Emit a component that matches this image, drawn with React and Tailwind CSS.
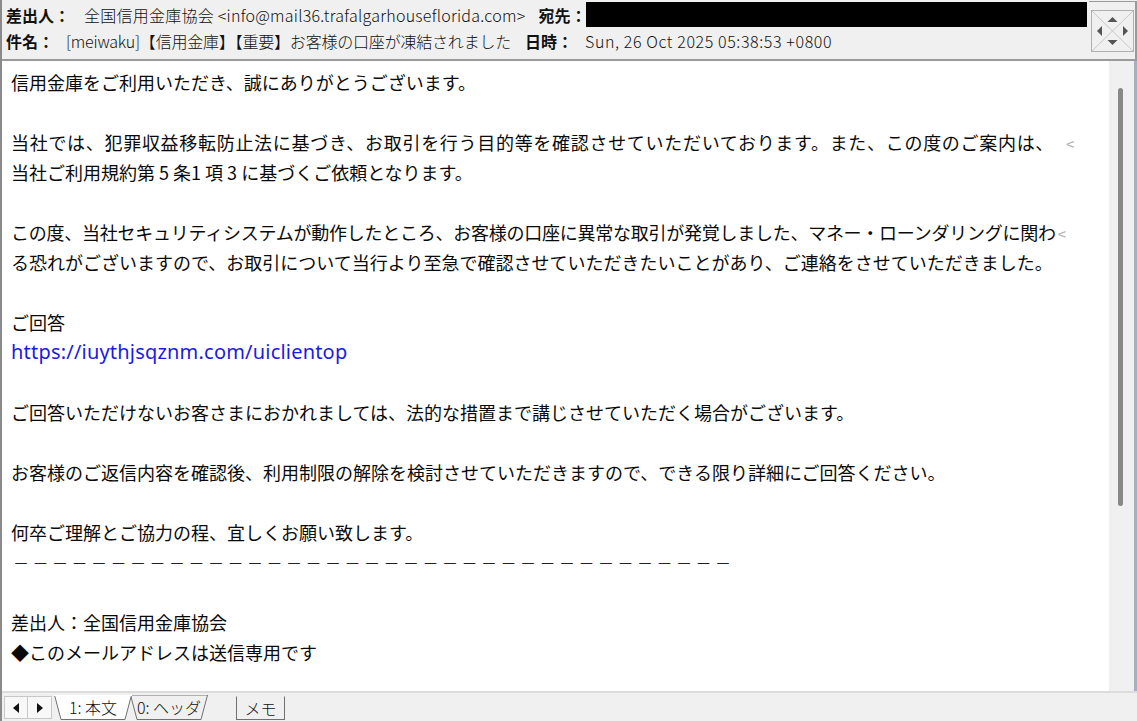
import { useState } from "react";

const jp = "font-['Noto_Sans_CJK_JP','Noto_Sans',sans-serif]";

const BODY = [
  { t: "信用金庫をご利用いただき、誠にありがとうございます。" },
  { t: "" },
  {
    t: "当社では、犯罪収益移転防止法に基づき、お取引を行う目的等を確認させていただいております。また、この度のご案内は、",
    wrap: "ml-[12px]",
    cls: "tracking-[0.7px]",
  },
  { t: "当社ご利用規約第 5 条1 項 3 に基づくご依頼となります。" },
  { t: "" },
  {
    t: "この度、当社セキュリティシステムが動作したところ、お客様の口座に異常な取引が発覚しました、マネー・ローンダリングに関わ",
    wrap: "ml-[2px]",
    cls: "tracking-[-0.25px]",
  },
  { t: "る恐れがございますので、お取引について当行より至急で確認させていただきたいことがあり、ご連絡をさせていただきました。" },
  { t: "" },
  { t: "ご回答" },
  { t: "https://iuythjsqznm.com/uiclientop", link: true },
  { t: "" },
  { t: "ご回答いただけないお客さまにおかれましては、法的な措置まで講じさせていただく場合がございます。" },
  { t: "" },
  { t: "お客様のご返信内容を確認後、利用制限の解除を検討させていただきますので、できる限り詳細にご回答ください。" },
  { t: "" },
  { t: "何卒ご理解とご協力の程、宜しくお願い致します。" },
  { dashes: true },
  { t: "" },
  { t: "差出人：全国信用金庫協会" },
  { t: "◆このメールアドレスは送信専用です" },
];

const NavWidget = () => (
  <div className="w-[43px] h-[42px] border border-[#b0b0b0] bg-[#f0f0f0]">
    <svg width="41" height="40" viewBox="0 0 41 40">
      <line x1="0" y1="0" x2="41" y2="40" stroke="#c8c8c8" strokeWidth="1" />
      <line x1="41" y1="0" x2="0" y2="40" stroke="#c8c8c8" strokeWidth="1" />
      <polygon points="20.5,6 15.5,11 25.5,11" fill="#555" />
      <polygon points="20.5,34 15.5,29 25.5,29" fill="#555" />
      <polygon points="5,20 10,15 10,25" fill="#555" />
      <polygon points="36,20 31,15 31,25" fill="#555" />
    </svg>
  </div>
);

const Tab = ({ label, active }) => (
  <div className={`relative h-[25px] w-[78px] flex items-center justify-center text-[16px] ${active ? "z-10" : ""}`}>
    <svg className="absolute inset-0" width="78" height="25" viewBox="0 0 78 25">
      <polygon
        points="0.5,0 7,24.5 71,24.5 77.5,0"
        fill={active ? "#ffffff" : "#f0f0f0"}
        stroke="#707070"
        strokeWidth="1"
      />
      {active && <line x1="0" y1="0" x2="78" y2="0" stroke="#ffffff" strokeWidth="2" />}
    </svg>
    <span className="relative text-[#111] -mt-[2px] font-light">{label}</span>
  </div>
);

export default function App() {
  const [tab] = useState(0);
  return (
    <div className={`w-[1137px] h-[721px] flex flex-col bg-[#f0f0f0] border-l-2 border-[#8a8a8a] overflow-hidden ${jp}`}>
      {/* header */}
      <div className="h-[61px] flex border-b-2 border-[#9a9a9a] border-t-2 border-t-[#f0f0f0]">
        <div className="flex-1 flex flex-col text-[16px] text-[#111]">
          <div className="h-[25px] flex items-center pl-[4px]">
            <span className="font-bold w-[78px]">差出人：</span>
            <span className="font-light tracking-[0.25px]">全国信用金庫協会 &lt;info@mail36.trafalgarhouseflorida.com&gt;</span>
            <span className="font-bold ml-[13px] w-[48px]">宛先：</span>
            <div className="flex-1 mr-[2px] h-[25px] bg-black" />
          </div>
          <div className="h-[26px] flex items-center pl-[4px] mt-[1px]">
            <span className="font-bold w-[60px]">件名：</span>
            <span className="font-light tracking-[-0.2px]">[meiwaku]【信用金庫】【重要】お客様の口座が凍結されました</span>
            <span className="font-bold ml-[14px] w-[60px]">日時：</span>
            <span className="font-light text-[16px] tracking-[0.6px]">
              Sun, 26 Oct 2025 05:38:53 +0800
            </span>
          </div>
        </div>
        <div className="w-[48px] flex flex-col items-start pt-[8px] pl-[2px] border-r-2 border-[#9a9a9a] border-t border-t-[#9a9a9a] -mt-[1px]">
          <NavWidget />
        </div>
      </div>

      {/* body */}
      <div className="flex-1 flex min-h-0 border-r-[3px] border-[#a8b0c0]">
        <div className="flex-1 bg-white pl-[9px] pt-[6px] text-[18px] leading-[30px] text-[#0a0a0a]">
          {BODY.map((l, i) =>
            l.dashes ? (
              <div key={i} className="h-[30px] whitespace-nowrap text-[16px] tracking-[3.5px] pl-[2px] text-[#222]">
                {"－".repeat(37)}
              </div>
            ) : (
              <div
                key={i}
                className={`h-[30px] whitespace-nowrap ${l.cls || ""} ${l.link ? "text-[#1a1ae6] font-['Noto_Sans',sans-serif] text-[20px] tracking-[0.2px]" : ""}`}
              >
                {l.t}
                {l.wrap && <span className={`${l.wrap} text-[15px] text-[#b0b0b0]`}>&lt;</span>}
              </div>
            )
          )}
        </div>
        <div className="w-[25px] bg-[#f0f0f0] pt-[27px] pl-[9px]">
          <div className="w-[5px] h-[418px] rounded-full bg-[#888888]" />
        </div>
      </div>

      {/* tab bar */}
      <div className="h-[30px] flex items-start pt-[2px] pl-[2px] border-t-2 border-[#dcdcdc]">
        <div className="flex h-[23px] mt-[1px] border border-[#c8c8c8] bg-[#f8f8f8]">
          <div className="w-[23px] flex items-center justify-center border-r border-[#c8c8c8]">
            <svg width="8" height="10" viewBox="0 0 8 10"><polygon points="1,5 7,0 7,10" fill="#111" /></svg>
          </div>
          <div className="w-[23px] flex items-center justify-center">
            <svg width="8" height="10" viewBox="0 0 8 10"><polygon points="7,5 1,0 1,10" fill="#111" /></svg>
          </div>
        </div>
        <div className="flex ml-[2px]">
          <Tab label="1: 本文" active={tab === 0} />
          <div className="-ml-[2px]">
            <Tab label="0: ヘッダ" active={tab === 1} />
          </div>
        </div>
        <div className="ml-[28px] mt-[1px] h-[24px] w-[49px] border border-[#707070] border-t-[#f0f0f0] flex items-center justify-center text-[16px] font-light text-[#111]">
          メモ
        </div>
      </div>
    </div>
  );
}
